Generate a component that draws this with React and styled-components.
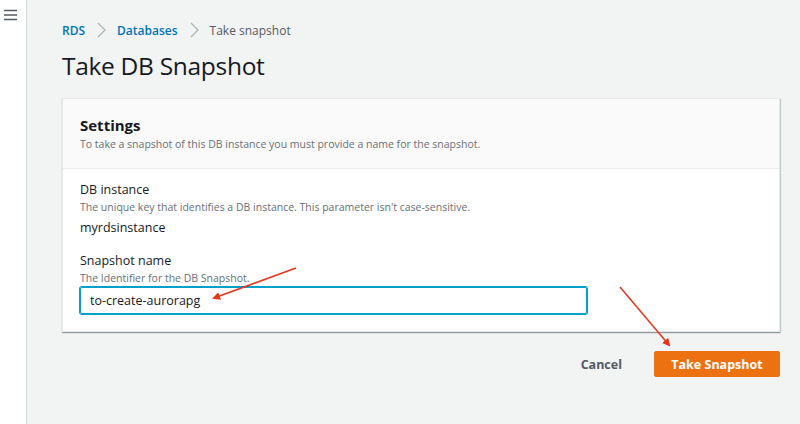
import React from "react";
import styled, { createGlobalStyle } from "styled-components";

const GlobalStyle = createGlobalStyle`
  html, body {
    margin: 0;
    padding: 0;
    background: #f2f3f3;
    font-family: "Open Sans", "Noto Sans", Arial, sans-serif;
    color: #16191f;
  }
`;

const StyledPage = styled.div`
  position: relative;
  display: flex;
  width: 800px;
  height: 424px;
  overflow: hidden;
`;

const StyledSideBar = styled.div`
  width: 27px;
  flex-shrink: 0;
  background: #fff;
  border-right: 1px solid #d5dbdb;
  padding-top: 9px;
  display: flex;
  justify-content: flex-start;
  padding-left: 4px;
  box-sizing: border-box;
`;

const StyledMain = styled.div`
  flex: 1;
  padding: 20px 20px 0 35px;
  display: flex;
  flex-direction: column;
`;

const StyledCrumbs = styled.nav`
  display: flex;
  align-items: center;
  gap: 11px;
  font-size: 12px;
  height: 20px;
`;

const StyledCrumb = styled.span`
  color: ${(p) => (p.$link ? "#0073bb" : "#545b64")};
  font-weight: ${(p) => (p.$link ? 600 : 400)};
`;

const StyledTitle = styled.h1`
  font-size: 24.5px;
  font-weight: 400;
  margin: 8px 0 0;
  line-height: 36px;
  letter-spacing: -0.3px;
`;

const StyledPanel = styled.section`
  margin-top: 14px;
  background: #fff;
  border: 1px solid #e6e8e8;
  box-shadow: 0 1px 1px 0 rgba(0, 28, 36, 0.3), 1px 1px 1px 0 rgba(0, 28, 36, 0.15);
`;

const StyledPanelHeader = styled.header`
  background: #fafafa;
  border-bottom: 1px solid #eaeded;
  padding: 15px 17px 12px;
  height: 42px;
`;

const StyledPanelTitle = styled.h2`
  margin: 0;
  font-size: 15px;
  font-weight: 700;
  line-height: 22px;
`;

const StyledHint = styled.div`
  font-size: 10.5px;
  color: #687078;
  line-height: 16px;
`;

const StyledPanelBody = styled.div`
  padding: 12px 17px 17px;
  display: flex;
  flex-direction: column;
  gap: 14px;
`;

const StyledField = styled.div`
  display: flex;
  flex-direction: column;
`;

const StyledLabel = styled.div`
  font-size: 12.5px;
  line-height: 18px;
`;

const StyledValue = styled.div`
  font-size: 12.5px;
  line-height: 20px;
  margin-top: 3px;
`;

const StyledInput = styled.div`
  margin-top: 1px;
  width: 507px;
  height: 27px;
  box-sizing: border-box;
  border: 1px solid #00a1c9;
  border-radius: 2px;
  box-shadow: 0 0 0 1px #00a1c9;
  display: flex;
  align-items: center;
  padding-left: 9px;
  font-size: 12.5px;
`;

const StyledActions = styled.div`
  display: flex;
  justify-content: flex-end;
  align-items: center;
  gap: 32px;
  margin-top: 19px;
`;

const StyledCancel = styled.button`
  background: none;
  border: none;
  font-family: inherit;
  font-size: 12.5px;
  font-weight: 700;
  color: #545b64;
  padding: 0;
`;

const StyledPrimary = styled.button`
  width: 126px;
  height: 26px;
  background: #ec7211;
  border: 1px solid #ec7211;
  border-radius: 2px;
  color: #fff;
  font-family: inherit;
  font-size: 12.5px;
  font-weight: 700;
`;

const StyledOverlay = styled.svg`
  position: absolute;
  left: 0;
  top: 0;
  pointer-events: none;
`;

const Chevron = () => (
  <svg width="10" height="16" viewBox="0 0 10 16">
    <path d="M2 1l7 7-7 7" fill="none" stroke="#aab7b8" strokeWidth="1.3" />
  </svg>
);

const Hamburger = () => (
  <svg width="13" height="12" viewBox="0 0 13 12">
    <path d="M0 1.5h13M0 6h13M0 10.5h13" stroke="#545b64" strokeWidth="1.6" />
  </svg>
);

const App = () => {
  return (
    <>
      <GlobalStyle />
      <StyledPage>
        <StyledSideBar>
          <Hamburger />
        </StyledSideBar>
        <StyledMain>
          <StyledCrumbs>
            <StyledCrumb $link>RDS</StyledCrumb>
            <Chevron />
            <StyledCrumb $link>Databases</StyledCrumb>
            <Chevron />
            <StyledCrumb>Take snapshot</StyledCrumb>
          </StyledCrumbs>
          <StyledTitle>Take DB Snapshot</StyledTitle>
          <StyledPanel>
            <StyledPanelHeader>
              <StyledPanelTitle>Settings</StyledPanelTitle>
              <StyledHint>
                To take a snapshot of this DB instance you must provide a name for the snapshot.
              </StyledHint>
            </StyledPanelHeader>
            <StyledPanelBody>
              <StyledField>
                <StyledLabel>DB instance</StyledLabel>
                <StyledHint>
                  The unique key that identifies a DB instance. This parameter isn't case-sensitive.
                </StyledHint>
                <StyledValue>myrdsinstance</StyledValue>
              </StyledField>
              <StyledField>
                <StyledLabel>Snapshot name</StyledLabel>
                <StyledHint>The Identifier for the DB Snapshot.</StyledHint>
                <StyledInput>to-create-aurorapg</StyledInput>
              </StyledField>
            </StyledPanelBody>
          </StyledPanel>
          <StyledActions>
            <StyledCancel>Cancel</StyledCancel>
            <StyledPrimary>Take Snapshot</StyledPrimary>
          </StyledActions>
        </StyledMain>
        <StyledOverlay width="800" height="424">
          <defs>
            <marker id="head" markerWidth="8" markerHeight="8" refX="6" refY="4" orient="auto" markerUnits="userSpaceOnUse">
              <path d="M0 0L8 4L0 8z" fill="#e8331c" />
            </marker>
          </defs>
          <line x1="296" y1="268" x2="214" y2="298" stroke="#e8331c" strokeWidth="1.5" markerEnd="url(#head)" />
          <line x1="620" y1="287" x2="669" y2="345" stroke="#e8331c" strokeWidth="1.5" markerEnd="url(#head)" />
        </StyledOverlay>
      </StyledPage>
    </>
  );
};

export default App;
